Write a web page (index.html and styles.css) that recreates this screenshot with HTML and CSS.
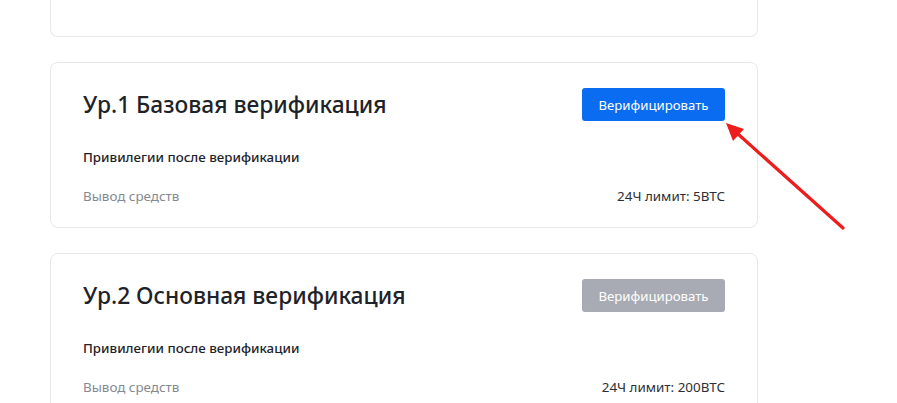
FILE: index.html
```html
<!DOCTYPE html>
<html lang="ru">
<head>
<meta charset="utf-8">
<link rel="stylesheet" href="styles.css">
</head>
<body>
<div class="page">
  <div class="card card-partial"></div>
  <div class="card">
    <div class="head">
      <h2 class="title">Ур.1 Базовая верификация</h2>
      <button class="btn btn-primary">Верифицировать</button>
    </div>
    <div class="subtitle">Привилегии после верификации</div>
    <div class="row">
      <span class="label">Вывод средств</span>
      <span class="value">24Ч лимит: 5BTC</span>
    </div>
  </div>
  <div class="card">
    <div class="head">
      <h2 class="title">Ур.2 Основная верификация</h2>
      <button class="btn btn-disabled">Верифицировать</button>
    </div>
    <div class="subtitle">Привилегии после верификации</div>
    <div class="row">
      <span class="label">Вывод средств</span>
      <span class="value">24Ч лимит: 200BTC</span>
    </div>
  </div>
  <svg class="arrow" width="897" height="403" viewBox="0 0 897 403">
    <line x1="843" y1="228" x2="738" y2="134" stroke="#ee1c1c" stroke-width="3.2" stroke-linecap="round"/>
    <polygon points="726,123 744,129 733,141" fill="#ee1c1c"/>
  </svg>
</div>
</body>
</html>
```

FILE: styles.css
```css
* { box-sizing: border-box; }
html, body { margin: 0; padding: 0; background: #fff; }
body {
  font-family: "Noto Sans", "Open Sans", sans-serif;
  color: #1e2329;
  width: 897px;
  height: 403px;
  overflow: hidden;
}
.page {
  position: relative;
  padding-left: 50px;
  width: 897px;
  height: 403px;
}
.card {
  width: 708px;
  border: 1px solid #e6e8ea;
  border-radius: 8px;
  padding: 25px 32px 22px 32px;
  margin-bottom: 25px;
  background: #fff;
}
.card-partial {
  height: 37px;
  border-top: none;
  border-radius: 0 0 8px 8px;
  padding: 0;
}
.head {
  display: flex;
  align-items: center;
  justify-content: space-between;
  height: 33px;
}
.title {
  margin: 0;
  font-size: 22.75px;
  font-weight: 500;
  line-height: 30px;
  color: #1e2329;
}
.btn {
  width: 143px;
  height: 33px;
  border: none;
  border-radius: 3px;
  color: #fff;
  font-family: inherit;
  font-size: 13.2px;
  padding: 0;
}
.btn-primary { background: #0a6cf0; }
.btn-disabled { background: #a8abb3; }
.subtitle {
  margin-top: 27px;
  font-size: 13.3px;
  font-weight: 500;
  line-height: 18px;
  color: #1e2329;
}
.row {
  display: flex;
  justify-content: space-between;
  margin-top: 21px;
  font-size: 13.4px;
  line-height: 18px;
}
.label { color: #858a92; }
.value { color: #2b2f36; }
.arrow {
  position: absolute;
  left: 0;
  top: 0;
  pointer-events: none;
}
```
